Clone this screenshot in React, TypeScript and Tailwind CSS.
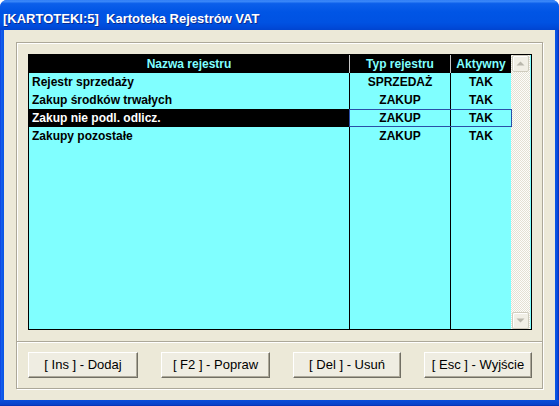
import React from "react";

const rows = [
  { name: "Rejestr sprzedaży", typ: "SPRZEDAŻ", akt: "TAK", sel: false },
  { name: "Zakup środków trwałych", typ: "ZAKUP", akt: "TAK", sel: false },
  { name: "Zakup nie podl. odlicz.", typ: "ZAKUP", akt: "TAK", sel: true },
  { name: "Zakupy pozostałe", typ: "ZAKUP", akt: "TAK", sel: false },
];

function ScrollBtn({ up }: { up: boolean }) {
  return (
    <div className="w-[17px] h-[17px] mx-[1px] bg-[#F1EFE6] border border-[#CFCCBE] rounded-[2px] flex items-center justify-center shadow-[inset_1px_1px_0_#ffffff]">
      <svg width="9" height="5" viewBox="0 0 9 5">
        {up ? (
          <path d="M0.5 4.5 L4.5 0.5 L8.5 4.5 Z" fill="#B9B7AC" />
        ) : (
          <path d="M0.5 0.5 L4.5 4.5 L8.5 0.5 Z" fill="#B9B7AC" />
        )}
      </svg>
    </div>
  );
}

function Btn({ label, w }: { label: string; w: string }) {
  return (
    <div
      className={`${w} h-[26px] flex items-center justify-center bg-[#EFEDE2] border border-t-white border-l-white border-r-[#716F64] border-b-[#716F64] shadow-[inset_-1px_-1px_0_#ACA899] text-[13px] text-black`}
    >
      {label}
    </div>
  );
}

export default function App() {
  return (
    <div className="w-[559px] h-[406px] bg-white font-['Liberation_Sans',Arial,sans-serif]">
      <div className="w-full h-full flex flex-col rounded-t-[7px] overflow-hidden bg-[linear-gradient(90deg,#0831D9_0px,#1661EE_1px,#0A56E6_3px,#0A56E6_calc(100%-3px),#0845D4_calc(100%-1px),#0628B0_100%)]">
        {/* Title bar */}
        <div className="h-[30px] shrink-0 pl-[3px] pt-[11px] bg-[linear-gradient(180deg,#2D7BF4_0%,#3E8BFA_4%,#0C5FEA_12%,#0055E5_40%,#0052E2_75%,#0049D8_92%,#0044CF_100%)]">
          <div className="text-white text-[13px] leading-[15px] font-bold whitespace-pre [text-shadow:1px_1px_0_#0B2A8F]">
            {"[KARTOTEKI:5]  Kartoteka Rejestrów VAT"}
          </div>
        </div>
        {/* Body */}
        <div className="flex-1 flex flex-col px-[4px] pb-[6px] bg-[linear-gradient(180deg,transparent_0,transparent_calc(100%-6px),#0A4ED9_calc(100%-6px),#0841C8_calc(100%-1px),#0628A8_100%)]">
          <div className="flex-1 bg-[#ECE9D8] pt-[12px] pl-[12px] pr-[12px] pb-[11px] flex">
            <div className="flex-1 flex flex-col border border-[#ACA899] shadow-[inset_1px_1px_0_#ffffff,1px_1px_0_#ffffff]">
              {/* upper section */}
              <div className="h-[298px] pt-[11px] pl-[11px]">
                <div className="w-[504px] h-[276px] border border-black flex bg-[#80FFFF]">
                  <div className="w-[482px] flex flex-col">
                    {/* header */}
                    <div className="grid grid-cols-[321px_101px_60px] h-[18px] bg-black text-[#80FFFF] text-[12px] font-bold leading-[18px]">
                      <div className="text-center border-r border-[#C8C8C8]">Nazwa rejestru</div>
                      <div className="text-center border-r border-[#C8C8C8]">Typ rejestru</div>
                      <div className="text-center">Aktywny</div>
                    </div>
                    {rows.map((r) => (
                      <div
                        key={r.name}
                        className="relative grid grid-cols-[321px_101px_60px] h-[18px] text-[12px] font-bold leading-[18px] text-black"
                      >
                        <div
                          className={`pl-[3px] border-r border-black whitespace-nowrap ${
                            r.sel ? "bg-black text-white" : ""
                          }`}
                        >
                          {r.name}
                        </div>
                        <div className="text-center border-r border-black">{r.typ}</div>
                        <div className="text-center">{r.akt}</div>
                        {r.sel && (
                          <div className="absolute left-[320px] top-0 w-[163px] h-[18px] border border-[#2A4FA8]" />
                        )}
                      </div>
                    ))}
                    <div className="flex-1 grid grid-cols-[321px_101px_60px]">
                      <div className="border-r border-black" />
                      <div className="border-r border-black" />
                      <div />
                    </div>
                  </div>
                  {/* scrollbar */}
                  <div className="w-[19px] flex flex-col justify-between bg-[image:repeating-conic-gradient(#FDFDFB_0%_25%,#E4E1D4_0%_50%)] bg-[length:2px_2px]">
                    <ScrollBtn up={true} />
                    <ScrollBtn up={false} />
                  </div>
                </div>
              </div>
              {/* lower section */}
              <div className="flex-1 border-t border-[#ACA899] shadow-[inset_0_1px_0_#ffffff] pt-[10px] pl-[11px] pr-[10px] flex items-start justify-between">
                <Btn label="[ Ins ] - Dodaj" w="w-[110px]" />
                <Btn label="[ F2 ] - Popraw" w="w-[109px]" />
                <Btn label="[ Del ] - Usuń" w="w-[108px]" />
                <Btn label="[ Esc ] - Wyjście" w="w-[108px]" />
              </div>
            </div>
          </div>
        </div>
      </div>
    </div>
  );
}
